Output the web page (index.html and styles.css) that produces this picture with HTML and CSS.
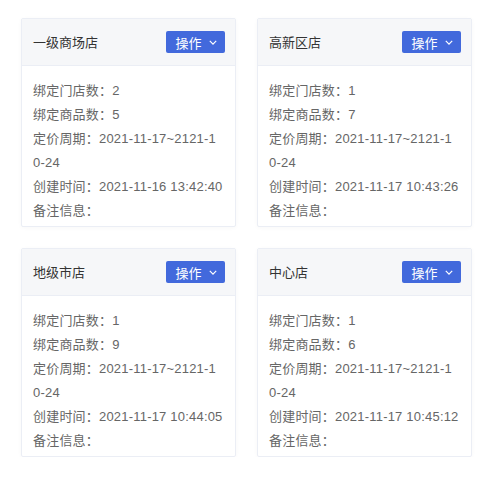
FILE: index.html
```html
<!DOCTYPE html>
<html lang="zh-CN">
<head>
    <meta charset="UTF-8">
    <meta name="viewport" content="width=device-width, initial-scale=1.0">
    <title>定价方案</title>
    <link rel="stylesheet" href="styles.css">
</head>
<body>
    <div class="card-list">
        <div class="card">
            <div class="card-header">
                <span class="card-title">一级商场店</span>
                <button class="btn">操作 <svg class="arrow" viewBox="0 0 10 6"><path d="M1 1 L5 5 L9 1"/></svg></button>
            </div>
            <div class="card-body">
                <p>绑定门店数：2</p>
                <p>绑定商品数：5</p>
                <p>定价周期：2021-11-17~2121-10-24</p>
                <p>创建时间：2021-11-16 13:42:40</p>
                <p>备注信息：</p>
            </div>
        </div>

        <div class="card">
            <div class="card-header">
                <span class="card-title">高新区店</span>
                <button class="btn">操作 <svg class="arrow" viewBox="0 0 10 6"><path d="M1 1 L5 5 L9 1"/></svg></button>
            </div>
            <div class="card-body">
                <p>绑定门店数：1</p>
                <p>绑定商品数：7</p>
                <p>定价周期：2021-11-17~2121-10-24</p>
                <p>创建时间：2021-11-17 10:43:26</p>
                <p>备注信息：</p>
            </div>
        </div>

        <div class="card">
            <div class="card-header">
                <span class="card-title">地级市店</span>
                <button class="btn">操作 <svg class="arrow" viewBox="0 0 10 6"><path d="M1 1 L5 5 L9 1"/></svg></button>
            </div>
            <div class="card-body">
                <p>绑定门店数：1</p>
                <p>绑定商品数：9</p>
                <p>定价周期：2021-11-17~2121-10-24</p>
                <p>创建时间：2021-11-17 10:44:05</p>
                <p>备注信息：</p>
            </div>
        </div>

        <div class="card">
            <div class="card-header">
                <span class="card-title">中心店</span>
                <button class="btn">操作 <svg class="arrow" viewBox="0 0 10 6"><path d="M1 1 L5 5 L9 1"/></svg></button>
            </div>
            <div class="card-body">
                <p>绑定门店数：1</p>
                <p>绑定商品数：6</p>
                <p>定价周期：2021-11-17~2121-10-24</p>
                <p>创建时间：2021-11-17 10:45:12</p>
                <p>备注信息：</p>
            </div>
        </div>
    </div>
</body>
</html>
```

FILE: styles.css
```css
body {
    margin: 0;
    background-color: #ffffff;
    font-family: "Liberation Sans", "Noto Sans CJK SC", sans-serif;
    color: #333333;
}

.card-list {
    display: grid;
    grid-template-columns: 215px 215px;
    gap: 21px;
    padding: 18px 0 0 21px;
}

.card {
    background-color: #ffffff;
    border: 1px solid #ebeef5;
    border-radius: 2px;
    box-shadow: 0 1px 4px rgba(0, 0, 0, 0.03);
}

.card-header {
    display: flex;
    align-items: center;
    justify-content: space-between;
    height: 46px;
    padding: 0 10px 0 11px;
    background-color: #f6f7f9;
    border-bottom: 1px solid #ebeef5;
}

.card-title {
    font-size: 13px;
    color: #333333;
    margin-top: -2px;
}

.btn {
    display: flex;
    align-items: center;
    gap: 7px;
    height: 22px;
    width: 59px;
    justify-content: center;
    padding: 0 0 0 1px;
    border: none;
    border-radius: 2px;
    background-color: #4269dc;
    color: #ffffff;
    font-family: inherit;
    font-size: 13px;
}

.arrow {
    width: 8px;
    height: 5px;
    fill: none;
    stroke: #ffffff;
    stroke-width: 1.5;
}

.card-body {
    padding: 13px 12px 3px 11px;
    font-size: 13px;
    color: #666666;
    letter-spacing: 0.2px;
}

.card-body p {
    margin: 0;
    line-height: 24px;
    word-break: break-all;
}
```
